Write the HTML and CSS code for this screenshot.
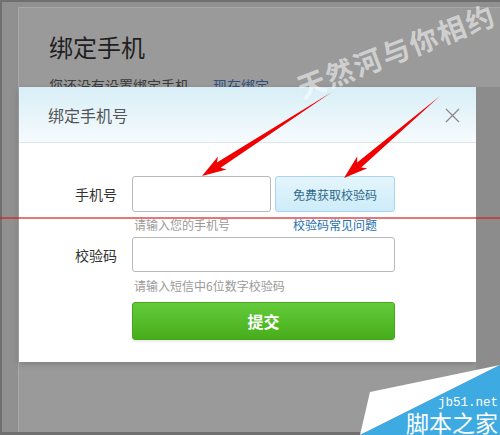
FILE: index.html
```html
<!DOCTYPE html>
<html lang="zh-CN">
<head>
<meta charset="utf-8">
<title>绑定手机</title>
<link rel="stylesheet" href="styles.css">
</head>
<body>
<div class="frame">
  <div class="panel">
    <div class="page-head">
      <h1 class="page-title">绑定手机</h1>
      <p class="page-sub">您还没有设置绑定手机，<a class="page-link">现在绑定</a></p>
    </div>
    <div class="stage">
      <div class="stage-main">
        <div class="modal">
          <div class="modal-head">
            <span class="modal-title">绑定手机号</span>
            <svg class="modal-close" width="15" height="15" viewBox="0 0 15 15"><path d="M1 1L14 14M14 1L1 14" stroke="#8a8a8a" stroke-width="1.3" fill="none"/></svg>
          </div>
          <div class="modal-body">
            <div class="form-row">
              <label class="form-label">手机号</label>
              <input class="field field-phone" type="text">
              <button class="code-btn" type="button">免费获取校验码</button>
            </div>
            <div class="hint-row">
              <span class="hint hint-phone">请输入您的手机号</span>
              <a class="help-link">校验码常见问题</a>
            </div>
            <div class="form-row form-row-code">
              <label class="form-label">校验码</label>
              <input class="field field-code" type="text">
            </div>
            <div class="hint-row hint-row-code">
              <span class="hint">请输入短信中6位数字校验码</span>
            </div>
            <button class="submit-btn" type="button">提交</button>
          </div>
        </div>
      </div>
      <div class="stage-side"></div>
    </div>
  </div>
</div>

<div class="watermark">天然河与你相约</div>
<div class="guide-line"></div>
<svg class="arrows" width="500" height="435" viewBox="0 0 500 435">
  <polygon fill="#f00000" points="332,92 220.6,167.8 226.5,169.4 202,176 218.0,156.6 216.9,162.6"/>
  <polygon fill="#f00000" points="440,96 361.2,167.4 367.3,168.3 344,178 357.2,156.5 357.2,162.6"/>
</svg>
<div class="logo">
  <svg class="logo-bg" width="140" height="70" viewBox="0 0 140 70">
    <polygon fill="#ffffff" points="10,27 140,0 0,70"/>
    <polygon fill="#3eaae2" points="140,0 0,70 140,70"/>
  </svg>
  <span class="logo-url">jb51.net</span>
  <span class="logo-name">脚本之家</span>
</div>
</body>
</html>
```

FILE: styles.css
```css
html, body {
  margin: 0;
  padding: 0;
  width: 500px;
  height: 435px;
  overflow: hidden;
}
body {
  background: #707070;
  font-family: "Noto Sans CJK SC", "Noto Sans", sans-serif;
  position: relative;
}
.frame {
  box-sizing: border-box;
  margin: 2px 0 0 2px;
  height: 430px;
  background: #909090;
  padding: 5px 0 0 16px;
  display: flex;
}
.panel {
  flex: 1;
  background: #9a9a9a;
  border-left: 1px solid #a8a8a8;
  border-top: 1px solid #a8a8a8;
  display: flex;
  flex-direction: column;
}
.page-head {
  padding-left: 30px;
}
.page-title {
  margin: 27px 0 0;
  font-size: 24px;
  line-height: 24px;
  font-weight: normal;
  color: #1f1f1f;
}
.page-sub {
  margin: 16px 0 0;
  height: 12px;
  overflow: hidden;
  font-size: 14px;
  line-height: 20px;
  color: #3a3a3a;
}
.page-link {
  margin-left: 10px;
  color: #2d5080;
}
.stage {
  flex: 1;
  display: flex;
}
.stage-main {
  width: 457px;
}
.stage-side {
  flex: 1;
  background: #8c8c8c;
}
.modal {
  background: #fff;
  height: 275px;
  box-shadow: 0 2px 6px rgba(0,0,0,0.18);
}
.modal-head {
  height: 55px;
  border-bottom: 1px solid #dfe6ea;
  background: linear-gradient(#d8eef7, #f6fbfd);
  display: flex;
  align-items: center;
  justify-content: space-between;
  padding: 0 16px 0 29px;
}
.modal-title {
  font-size: 16px;
  color: #555;
}
.modal-close {
  display: block;
  margin-top: 2px;
}
.modal-body {
  padding: 33px 0 0;
}
.form-row {
  display: flex;
  align-items: center;
  height: 36px;
}
.form-label {
  width: 98px;
  margin-right: 15px;
  text-align: right;
  font-size: 14px;
  color: #333;
}
.field {
  box-sizing: border-box;
  margin: 0;
  border: 1px solid #b9b9b9;
  border-radius: 3px;
  background: #fff;
  padding: 0 6px;
}
.field-phone {
  width: 139px;
  height: 36px;
}
.code-btn {
  box-sizing: border-box;
  margin: 0 0 0 4px;
  width: 120px;
  height: 36px;
  border: 1px solid #a9d6ec;
  border-radius: 3px;
  background: linear-gradient(#e5f5fc, #cdecf9);
  font-family: inherit;
  font-size: 12px;
  color: #2f6a8a;
  padding: 0;
}
.hint-row {
  margin-top: 4px;
  height: 18px;
  display: flex;
  align-items: center;
  padding-left: 115px;
  font-size: 12px;
  line-height: 18px;
}
.hint {
  color: #9a9a9a;
}
.hint-phone {
  width: 141px;
}
.help-link {
  width: 120px;
  text-align: center;
  color: #1d6eae;
}
.form-row-code {
  margin-top: 3px;
  height: 35px;
}
.field-code {
  width: 263px;
  height: 35px;
}
.hint-row-code {
  margin-top: 5px;
}
.submit-btn {
  display: block;
  box-sizing: border-box;
  margin: 7px 0 0 113px;
  width: 263px;
  height: 38px;
  border: 1px solid #48a61e;
  border-radius: 3px;
  background: linear-gradient(#63cb3a, #47ad1b);
  box-shadow: 0 2px 2px rgba(0,0,0,0.08);
  font-family: inherit;
  font-size: 16px;
  font-weight: bold;
  color: #fff;
  padding: 0;
}
.watermark {
  position: absolute;
  left: 396px;
  top: 50px;
  transform: translate(-50%, -50%) rotate(-21deg);
  white-space: nowrap;
  font-size: 28px;
  line-height: 32px;
  font-weight: bold;
  letter-spacing: 2px;
  color: rgba(255,255,255,0.55);
}
.guide-line {
  position: absolute;
  left: 0;
  top: 217px;
  width: 500px;
  height: 2px;
  background: rgba(210,30,30,0.6);
}
.arrows {
  position: absolute;
  left: 0;
  top: 0;
  pointer-events: none;
}
.logo {
  position: absolute;
  right: 0;
  bottom: 0;
  width: 140px;
  height: 70px;
  box-sizing: border-box;
  padding: 0 2px 2px 0;
  display: flex;
  flex-direction: column;
  align-items: flex-end;
  justify-content: flex-end;
  color: #fff;
}
.logo-bg {
  position: absolute;
  left: 0;
  top: 0;
}
.logo-url {
  position: relative;
  font-family: "Liberation Mono", monospace;
  font-size: 12.5px;
  line-height: 13px;
  margin-bottom: 1px;
}
.logo-name {
  position: relative;
  font-size: 23px;
  line-height: 22px;
}
```
